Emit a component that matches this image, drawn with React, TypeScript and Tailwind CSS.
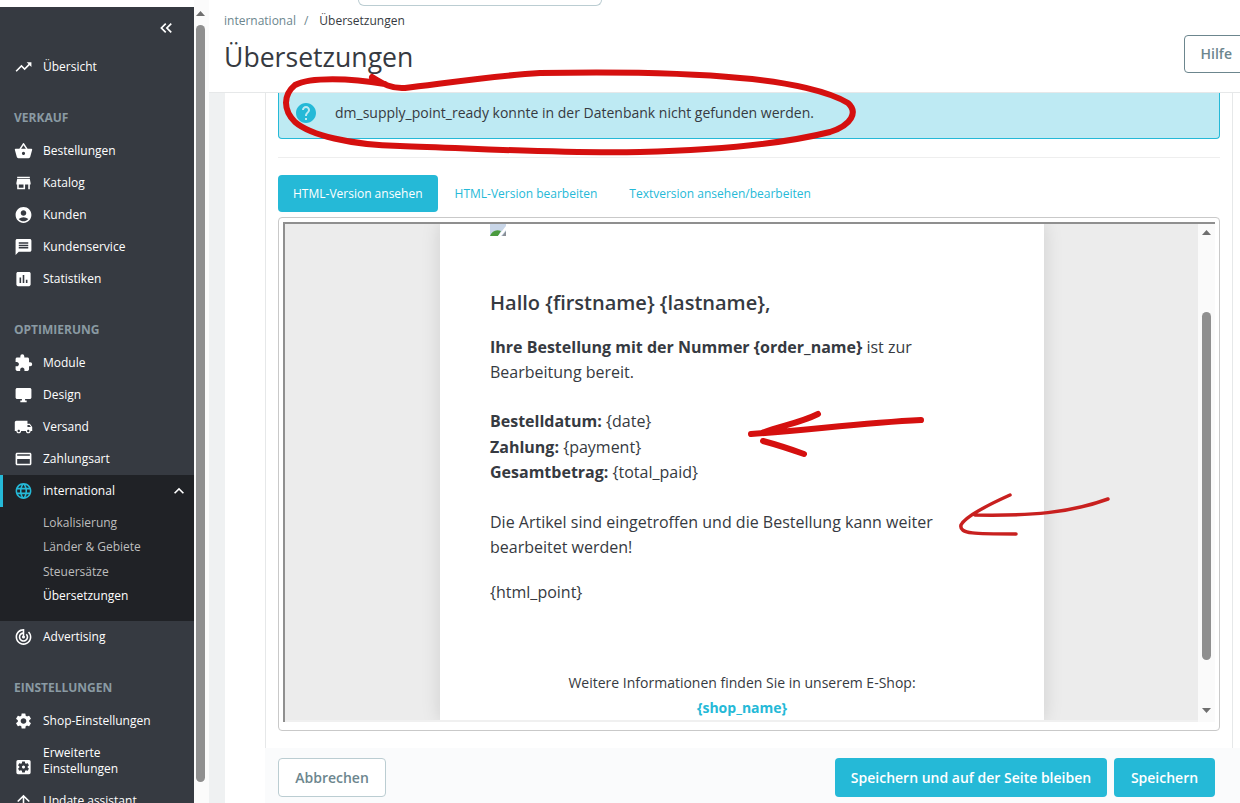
import type { ReactNode } from "react";
import {
  MdTrendingUp,
  MdShoppingBasket,
  MdStore,
  MdAccountCircle,
  MdMessage,
  MdAssessment,
  MdExtension,
  MdDesktopWindows,
  MdLocalShipping,
  MdPayment,
  MdLanguage,
  MdExpandLess,
  MdTrackChanges,
  MdSettings,
  MdSettingsApplications,
  MdArrowUpward,
  MdHelp,
  MdKeyboardDoubleArrowLeft,
} from "react-icons/md";

function NavItem({ icon, children }: { icon: ReactNode; children: ReactNode }) {
  return (
    <div className="flex h-8 shrink-0 items-center gap-[10px] pl-[14px] text-white">
      <span className="flex w-[19px] justify-center text-[20px]">{icon}</span>
      <span>{children}</span>
    </div>
  );
}

function SectionLabel({ children }: { children: ReactNode }) {
  return <div className="mt-[19px] flex h-[33px] shrink-0 items-center pb-px pl-[14px] font-bold text-[#8a9aa3]">{children}</div>;
}

function Sidebar() {
  return (
    <aside className="mt-[7px] flex w-[194px] shrink-0 flex-col overflow-hidden bg-[#363a41] text-xs">
      <div className="flex h-[44px] shrink-0 items-center justify-end pb-[2px] pr-[18px] text-white">
        <MdKeyboardDoubleArrowLeft className="text-[20px]" />
      </div>
      <NavItem icon={<MdTrendingUp />}>Übersicht</NavItem>

      <SectionLabel>VERKAUF</SectionLabel>
      <NavItem icon={<MdShoppingBasket />}>Bestellungen</NavItem>
      <NavItem icon={<MdStore />}>Katalog</NavItem>
      <NavItem icon={<MdAccountCircle />}>Kunden</NavItem>
      <NavItem icon={<MdMessage />}>Kundenservice</NavItem>
      <NavItem icon={<MdAssessment />}>Statistiken</NavItem>

      <SectionLabel>OPTIMIERUNG</SectionLabel>
      <NavItem icon={<MdExtension />}>Module</NavItem>
      <NavItem icon={<MdDesktopWindows />}>Design</NavItem>
      <NavItem icon={<MdLocalShipping />}>Versand</NavItem>
      <NavItem icon={<MdPayment />}>Zahlungsart</NavItem>

      <div className="h-[146px] shrink-0 bg-[#202226]">
        <div className="flex h-8 items-center gap-[10px] border-l-[3px] border-[#25b9d7] pl-[11px] text-white">
          <MdLanguage className="w-[19px] text-[20px] text-[#25b9d7]" />
          <span className="flex-1">international</span>
          <MdExpandLess className="mr-[5px] text-[20px]" />
        </div>
        <div className="mt-1 flex flex-col pl-[43px] text-[#bebebe]">
          <span className="flex h-[24px] items-center">Lokalisierung</span>
          <span className="flex h-[24px] items-center">Länder &amp; Gebiete</span>
          <span className="flex h-[25px] items-center">Steuersätze</span>
          <span className="flex h-[24px] items-center text-white">Übersetzungen</span>
        </div>
      </div>

      <NavItem icon={<MdTrackChanges />}>Advertising</NavItem>

      <SectionLabel>EINSTELLUNGEN</SectionLabel>
      <NavItem icon={<MdSettings />}>Shop-Einstellungen</NavItem>
      <div className="flex h-12 shrink-0 items-end gap-[10px] pb-2 pl-[14px] text-white">
        <span className="flex w-[19px] justify-center text-[20px]">
          <MdSettingsApplications />
        </span>
        <span className="leading-4">
          Erweiterte
          <br />
          Einstellungen
        </span>
      </div>
      <NavItem icon={<MdArrowUpward />}>Update assistant</NavItem>
    </aside>
  );
}

function ScrollArrow({ up }: { up?: boolean }) {
  return (
    <svg width="9" height="5" viewBox="0 0 9 5" className="shrink-0 fill-[#6f6f6f]">
      <path d={up ? "M4.5 0 9 5H0z" : "M0 0h9L4.5 5z"} />
    </svg>
  );
}

function BrokenImage() {
  return (
    <svg width="16" height="12" viewBox="0 0 16 12" className="block">
      <path d="M0 0h16v12H0z" fill="#c9d6e8" />
      <path d="M0 12C2 7 6 5 11 7L8 12z" fill="#4a9a3f" />
      <path d="M16 2v4l-5 6H8z" fill="#fff" />
      <path d="M12 12l4-5v5z" fill="#8a8f96" />
    </svg>
  );
}

function EmailBody() {
  return (
    <div className="h-full w-[604px] shrink-0 overflow-hidden bg-white pl-[50px] pr-[90px] text-base leading-[25px] text-[#363a41] shadow-[0_0_18px_rgba(0,0,0,0.13)]">
      <BrokenImage />
      <h2 className="mt-[53px] text-[20px] font-semibold leading-7">Hallo {"{firstname}"} {"{lastname}"},</h2>
      <p className="mt-[18px]">
        <b>Ihre Bestellung mit der Nummer {"{order_name}"}</b> ist zur Bearbeitung bereit.
      </p>
      <p className="mt-[24px]">
        <b>Bestelldatum:</b> {"{date}"}
      </p>
      <p className="mt-px">
        <b>Zahlung:</b> {"{payment}"}
      </p>
      <p>
        <b>Gesamtbetrag:</b> {"{total_paid}"}
      </p>
      <p className="mt-[25px]">Die Artikel sind eingetroffen und die Bestellung kann weiter bearbeitet werden!</p>
      <p className="mt-5">{"{html_point}"}</p>
      <div className="-mr-[40px] mt-[65px] text-center text-sm leading-[25px]">
        <p>Weitere Informationen finden Sie in unserem E-Shop:</p>
        <p className="font-bold text-[#25b9d7]">{"{shop_name}"}</p>
      </div>
    </div>
  );
}

function Preview() {
  return (
    <div className="mt-[5px] h-[514px] rounded border border-[#c9c9c9] p-1">
      <div className="flex h-[500px] border-l-[2px] border-t-[2px] border-[#8f8f8f]">
        <div className="flex min-w-0 flex-1 flex-col overflow-hidden">
          <div className="flex min-h-0 flex-1 overflow-hidden bg-[#ececec] pl-[155px]">
            <EmailBody />
          </div>
          <div className="h-[2px] shrink-0 bg-[#f0f0f0]" />
        </div>
        <div className="flex w-[17px] shrink-0 flex-col items-center bg-[#fafafa] pb-[9px] pt-[6px]">
          <ScrollArrow up />
          <div className="mt-[77px] h-[348px] w-[9px] shrink-0 rounded-full bg-[#8f8f8f]" />
          <div className="flex-1" />
          <ScrollArrow />
        </div>
      </div>
    </div>
  );
}

function Scribbles() {
  return (
    <svg className="pointer-events-none absolute left-0 top-0" width="1240" height="803" viewBox="0 0 1240 803" fill="none" strokeLinecap="round" strokeLinejoin="round">
      <path
        d="M372 77C383 84 392 89 405 88C440 84 490 76 540 73C600 72 680 72 740 78C790 82 830 92 848 103C858 112 852 125 830 132C790 142 730 150 640 152C560 154 470 148 400 146C350 145 310 135 295 122C283 110 283 95 295 85C310 77 350 78 385 84"
        stroke="#d5100f"
        strokeWidth="6"
      />
      <path d="M921 420C860 423 810 430 751 434M818 414C800 423 780 426 762 433M763 441C778 445 790 449 804 454" stroke="#d5100f" strokeWidth="6" />
      <path d="M1108 499C1070 513 1030 516 975 515M1010 495C990 504 965 517 961 525C959 534 975 534 1016 534" stroke="#c8201f" strokeWidth="3.5" />
    </svg>
  );
}

export default function App() {
  return (
    <div className="relative flex h-[803px] w-[1240px] overflow-hidden bg-white font-['Open_Sans',sans-serif] text-[#363a41]">
      <Sidebar />

      <div className="flex w-[15px] shrink-0 flex-col items-center bg-[#fbfbfb] pt-[11px] pr-[2px]">
        <ScrollArrow up />
        <div className="mt-[9px] h-[757px] w-[9px] shrink-0 rounded-full bg-[#8f8f8f]" />
      </div>

      <main className="flex min-w-0 flex-1 flex-col overflow-hidden">
        <header className="h-[93px] shrink-0 border-b border-[#e6e8e9] bg-white pl-[15px]">
          <div className="ml-[134px] h-[6px] w-[244px] rounded-b-[14px] border border-t-0 border-[#bbcdd2]" />
          <div className="mt-[7px] flex items-center gap-[8px] text-xs leading-4 text-[#6c868e]">
            international <span>/</span> <span className="ml-[3px] text-[#363a41]">Übersetzungen</span>
          </div>
          <div className="mt-[6px] flex items-start justify-between">
            <h1 className="mt-[6px] text-[26.6px] leading-8">Übersetzungen</h1>
            <button className="-mr-[9px] h-[38px] shrink-0 rounded border border-[#6c868e] px-4 text-sm font-semibold text-[#6c868e]">Hilfe</button>
          </div>
        </header>

        <div className="flex min-h-0 flex-1">
          <div className="w-[16px] shrink-0 bg-[#eff1f2]" />
          <div className="w-[40px] shrink-0 bg-white" />
          <div className="flex w-[968px] shrink-0 flex-col border-x border-[#e6e8e9] bg-white">
            <div className="flex-1 px-3">
              <div className="flex h-[46px] items-center gap-[17px] rounded-b border-x border-b border-[#25b9d7] bg-[#beeaf3] pb-[6px] pl-[15px] text-sm">
                <MdHelp className="text-[24px] text-[#25b9d7]" />
                <span>dm_supply_point_ready konnte in der Datenbank nicht gefunden werden.</span>
              </div>
              <div className="mt-[18px] h-px bg-[#eeeeee]" />
              <div className="mt-[17px] flex h-[37px] items-center gap-[2px] text-xs text-[#25b9d7]">
                <span className="flex h-full items-center rounded bg-[#25b9d7] px-[15px] text-white">HTML-Version ansehen</span>
                <span className="px-[15px]">HTML-Version bearbeiten</span>
                <span className="px-[15px]">Textversion ansehen/bearbeiten</span>
              </div>
              <Preview />
            </div>
          </div>
          <div className="flex-1 bg-white" />
        </div>

        <footer className="-mt-[55px] ml-[56px] flex h-[55px] shrink-0 items-start justify-between bg-[#fafbfc] pl-[13px] pr-[25px] pt-[10px] text-sm font-semibold">
          <button className="h-[39px] w-[108px] rounded border border-[#bbcdd2] bg-white text-[#6c868e]">Abbrechen</button>
          <div className="flex gap-[7px]">
            <button className="h-[39px] w-[272px] rounded bg-[#25b9d7] text-white">Speichern und auf der Seite bleiben</button>
            <button className="h-[39px] w-[101px] rounded bg-[#25b9d7] text-white">Speichern</button>
          </div>
        </footer>
      </main>

      <Scribbles />
    </div>
  );
}
